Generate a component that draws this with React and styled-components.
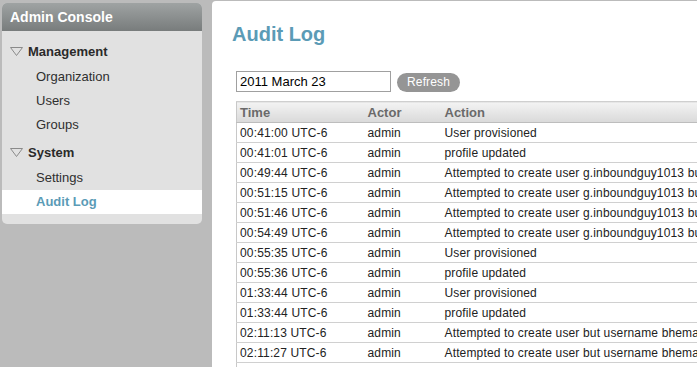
import React from "react";
import styled, { createGlobalStyle } from "styled-components";

const Global = createGlobalStyle`
  html, body { margin: 0; padding: 0; background: #bbbbbb; overflow: hidden; }
  body { font-family: "Liberation Sans", Arial, sans-serif; font-size: 13px; }
  #root { height: 100vh; }
`;

const Page = styled.div`
  display: flex;
  align-items: flex-start;
  height: 100vh;
`;

const Sidebar = styled.nav`
  width: 200px;
  flex: none;
  margin: 3px 0 0 2px;
  background: #e1e1e1;
  border-radius: 5px;
  overflow: hidden;
  padding-bottom: 10px;
`;

const SideHeader = styled.div`
  height: 28px;
  line-height: 28px;
  padding-left: 8px;
  background: linear-gradient(#9fa3a3, #787c7c);
  color: #fff;
  font-weight: bold;
  font-size: 14px;
`;

const Section = styled.div`
  display: flex;
  align-items: center;
  gap: 5px;
  height: 28px;
  padding-left: 8px;
  font-weight: bold;
  font-size: 13px;
  color: #2a2a2a;
  margin-top: ${(p) => p.$top || 0}px;
`;

const Item = styled.div`
  height: 24px;
  line-height: 24px;
  padding-left: 34px;
  color: ${(p) => (p.$active ? "#5b9bb6" : "#2f2f2f")};
  background: ${(p) => (p.$active ? "#ffffff" : "transparent")};
  font-weight: ${(p) => (p.$active ? "bold" : "normal")};
`;

const Content = styled.main`
  flex: 1;
  min-width: 0;
  margin: 1px 0 0 10px;
  height: calc(100vh - 1px);
  background: #fff;
  border-top-left-radius: 4px;
  overflow: hidden;
  padding: 21px 0 0 20px;
  box-sizing: border-box;
`;

const Title = styled.h1`
  margin: 0 0 25px 0;
  font-size: 20px;
  font-weight: bold;
  color: #5b9bb6;
  line-height: 24px;
`;

const Toolbar = styled.div`
  display: flex;
  align-items: center;
  gap: 6px;
  margin: 0 0 9px 4px;
`;

const DateInput = styled.input`
  width: 155px;
  height: 21px;
  box-sizing: border-box;
  border: 1px solid #a0a0a0;
  padding: 0 3px;
  font-family: "Liberation Sans", Arial, sans-serif;
  font-size: 13px;
  color: #000;
  outline: none;
`;

const Button = styled.button`
  height: 19px;
  margin-top: 2px;
  padding: 0 10px;
  border: none;
  border-radius: 10px;
  background: #959595;
  color: #fff;
  font-family: "Liberation Sans", Arial, sans-serif;
  font-size: 12px;
  letter-spacing: 0.15px;
  line-height: 19px;
`;

const Table = styled.table`
  margin-left: 4px;
  border-collapse: collapse;
  table-layout: fixed;
  width: 800px;
  white-space: nowrap;
  border-left: 1px solid #c8c8c8;
`;

const Th = styled.th`
  height: 21px;
  box-sizing: border-box;
  text-align: left;
  padding: 0 0 0 3px;
  font-weight: bold;
  font-size: 13px;
  color: #6a6a6a;
  background: linear-gradient(#f3f3f3, #d9d9d9);
  border-top: 1px solid #cfcfcf;
  border-bottom: 1px solid #bdbdbd;
`;

const Td = styled.td`
  height: 19px;
  padding: 0 0 0 3px;
  font-size: 12px;
  letter-spacing: 0.15px;
  color: #222;
  border-bottom: 1px solid #d0d0d0;
  overflow: hidden;
`;

const Tri = () => (
  <svg width="13" height="9" viewBox="0 0 13 9">
    <path d="M0.5 0.5 H12.5 L6.5 8.5 Z" fill="none" stroke="#8a8a8a" strokeWidth="1" />
  </svg>
);

const A1 = "Attempted to create user g.inboundguy1013 but username already exists";
const A2 = "Attempted to create user but username bhemant already exists";

const rows = [
  ["00:41:00 UTC-6", "User provisioned"],
  ["00:41:01 UTC-6", "profile updated"],
  ["00:49:44 UTC-6", A1],
  ["00:51:15 UTC-6", A1],
  ["00:51:46 UTC-6", A1],
  ["00:54:49 UTC-6", A1],
  ["00:55:35 UTC-6", "User provisioned"],
  ["00:55:36 UTC-6", "profile updated"],
  ["01:33:44 UTC-6", "User provisioned"],
  ["01:33:44 UTC-6", "profile updated"],
  ["02:11:13 UTC-6", A2],
  ["02:11:27 UTC-6", A2],
  ["02:14:02 UTC-6", "User provisioned"],
];

export default function App() {
  return (
    <>
      <Global />
      <Page>
        <Sidebar>
          <SideHeader>Admin Console</SideHeader>
          <Section $top={6}>
            <Tri />
            Management
          </Section>
          <Item>Organization</Item>
          <Item>Users</Item>
          <Item>Groups</Item>
          <Section $top={1}>
            <Tri />
            System
          </Section>
          <Item>Settings</Item>
          <Item $active>Audit Log</Item>
        </Sidebar>
        <Content>
          <Title>Audit Log</Title>
          <Toolbar>
            <DateInput defaultValue="2011 March 23" />
            <Button>Refresh</Button>
          </Toolbar>
          <Table>
            <colgroup>
              <col style={{ width: 128 }} />
              <col style={{ width: 77 }} />
              <col />
            </colgroup>
            <thead>
              <tr>
                <Th>Time</Th>
                <Th>Actor</Th>
                <Th>Action</Th>
              </tr>
            </thead>
            <tbody>
              {rows.map(([t, a], i) => (
                <tr key={i}>
                  <Td>{t}</Td>
                  <Td>admin</Td>
                  <Td>{a}</Td>
                </tr>
              ))}
            </tbody>
          </Table>
        </Content>
      </Page>
    </>
  );
}
